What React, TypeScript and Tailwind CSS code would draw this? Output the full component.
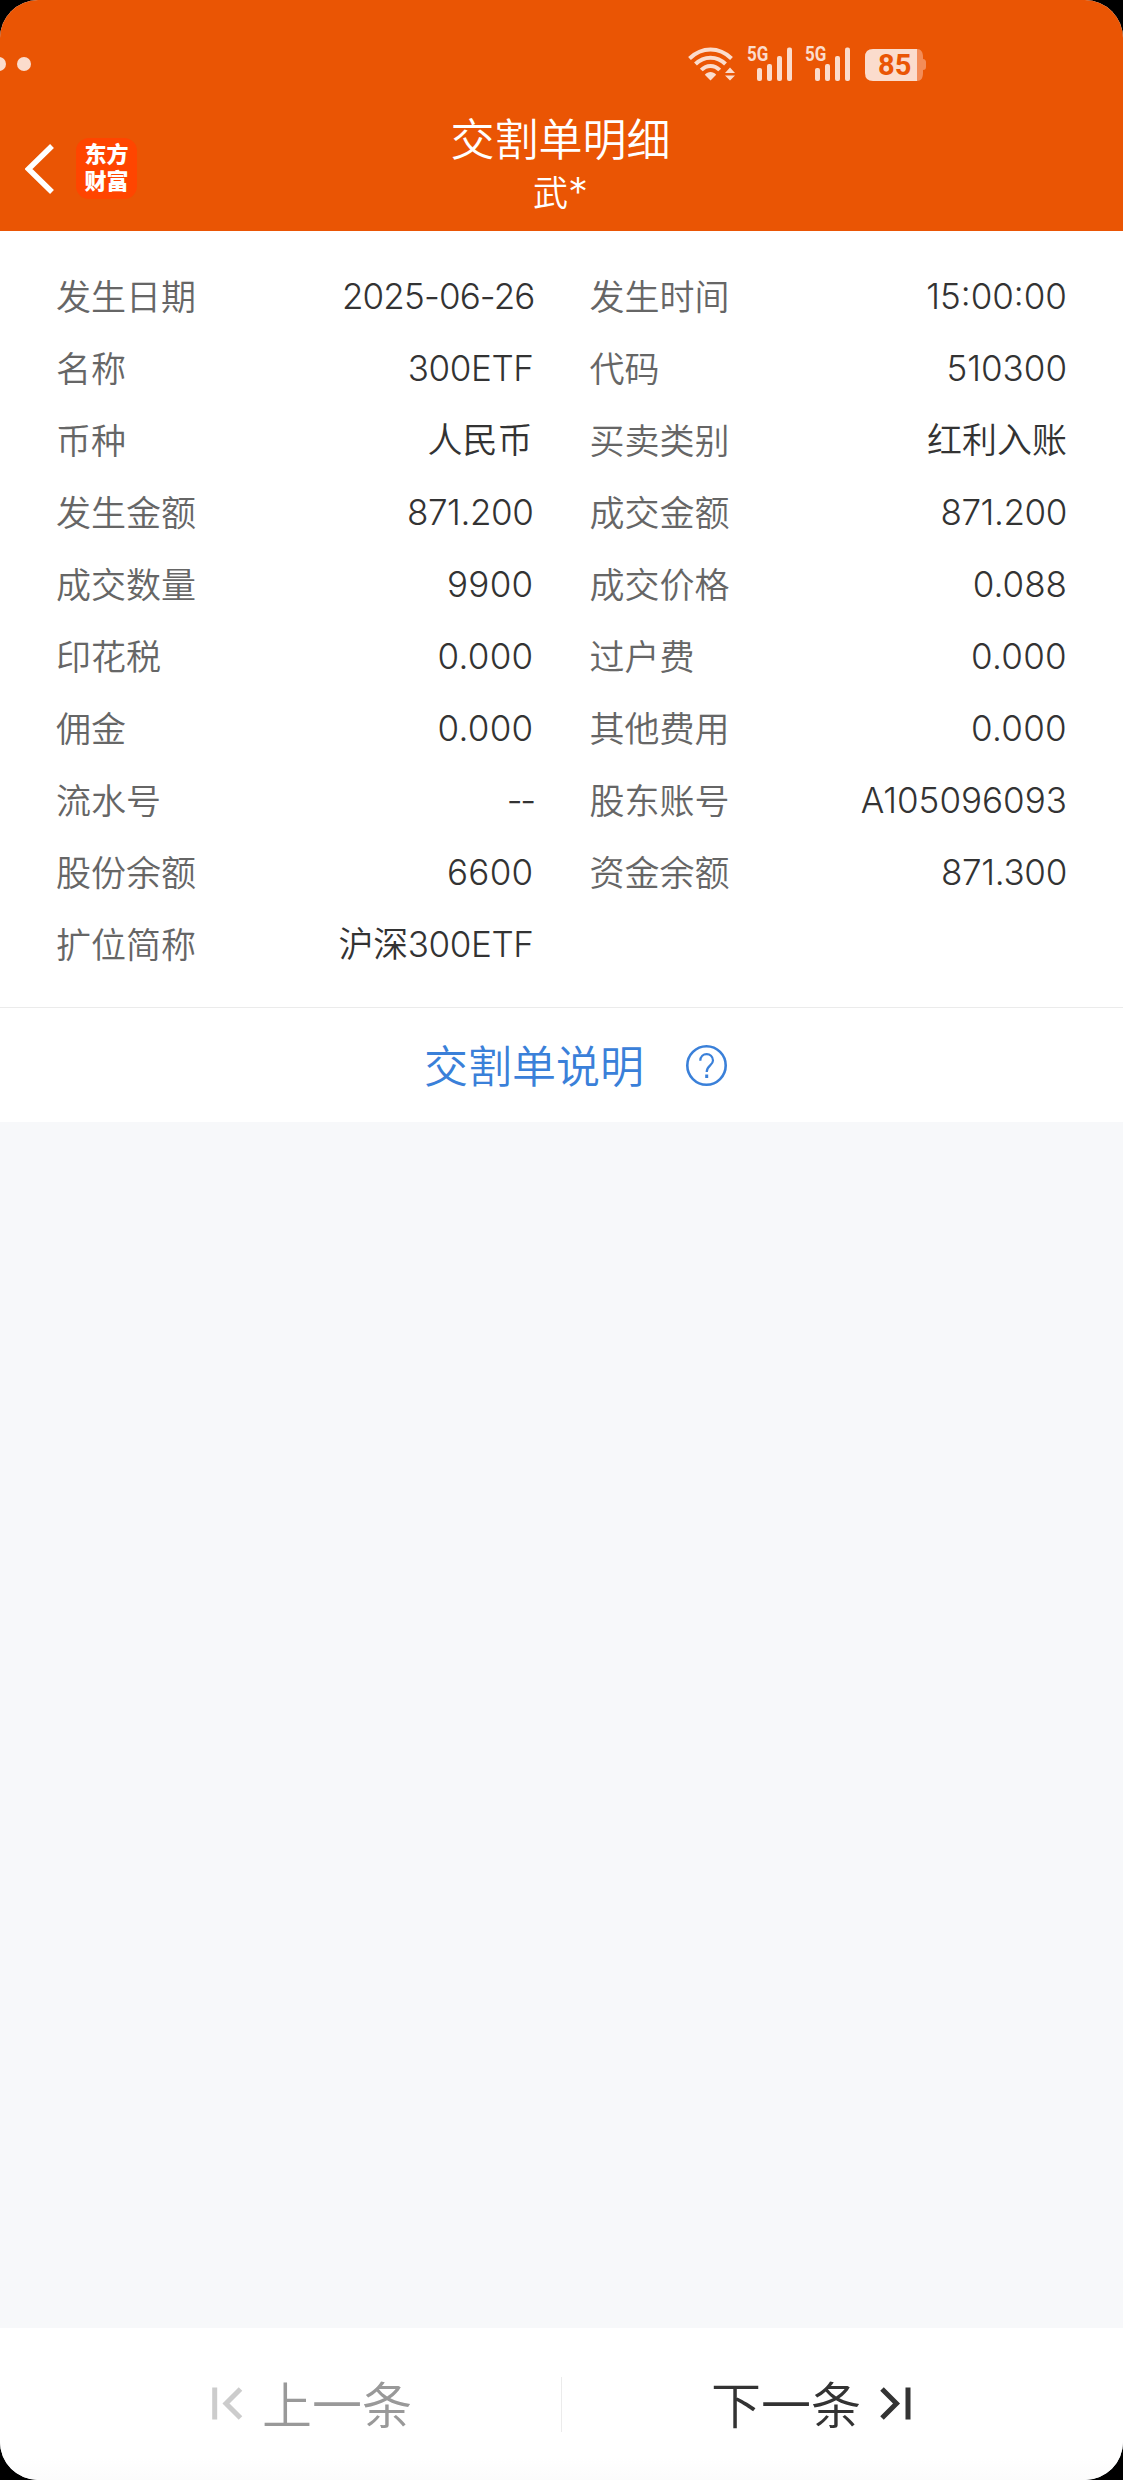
import React from 'react';
import clsx from 'clsx';

type Field = {
    label: string;
    value: string;
    tracking?: string;
};

const fields: Field[] = [
    { label: '发生日期', value: '2025-06-26', tracking: 'tracking-[-0.85px] -mr-px' },
    { label: '发生时间', value: '15:00:00' },
    { label: '名称', value: '300ETF', tracking: 'tracking-[-0.4px]' },
    { label: '代码', value: '510300' },
    { label: '币种', value: '人民币', tracking: 'mr-px' },
    { label: '买卖类别', value: '红利入账' },
    { label: '发生金额', value: '871.200', tracking: 'tracking-[-0.4px]' },
    { label: '成交金额', value: '871.200', tracking: 'tracking-[-0.4px]' },
    { label: '成交数量', value: '9900', tracking: 'tracking-[0.3px]' },
    { label: '成交价格', value: '0.088' },
    { label: '印花税', value: '0.000', tracking: 'tracking-[0.3px]' },
    { label: '过户费', value: '0.000', tracking: 'tracking-[0.3px]' },
    { label: '佣金', value: '0.000', tracking: 'tracking-[0.3px]' },
    { label: '其他费用', value: '0.000', tracking: 'tracking-[0.3px]' },
    { label: '流水号', value: '--', tracking: 'tracking-[-2.5px]' },
    { label: '股东账号', value: 'A105096093' },
    { label: '股份余额', value: '6600', tracking: 'tracking-[0.3px]' },
    { label: '资金余额', value: '871.300', tracking: 'tracking-[-0.3px]' },
    { label: '扩位简称', value: '沪深300ETF', tracking: 'tracking-[-0.4px]' },
];

const WifiIcon = () => (
    <svg width="48" height="36" viewBox="0 0 48 36" fill="none" stroke="#fbdccd" strokeWidth="4">
        <path d="M1.5 12.5C14 0.5 31 0.5 43.5 12.5" />
        <path d="M7.5 18C16 9.5 29 9.5 37.5 18" />
        <path d="M13.3 24C18.5 18.5 26.5 18.5 31.7 24" />
        <path d="M22.5 34.5L16.8 28.8C20 25.2 25 25.2 28.2 28.8Z" fill="#fbdccd" stroke="none" />
        <path d="M42 21.5L47 27H37ZM42 34.5L37 29.5H47Z" fill="#fbdccd" stroke="none" />
    </svg>
);

const Signal = () => (
    <div className="relative h-[36px] w-[46px]">
        <span className="absolute -left-px top-0 origin-left scale-x-[0.85] font-[Roboto] text-[20px] font-bold leading-[17px] text-[#fbdccd]">
            5G
        </span>
        <svg className="absolute left-0 top-0" width="46" height="36" viewBox="0 0 46 36" fill="#fbdccd">
            <rect x="9" y="22" width="5" height="13" rx="2" />
            <rect x="19" y="18" width="5" height="17" rx="2" />
            <rect x="29" y="10" width="5" height="25" rx="2" />
            <rect x="39" y="1.5" width="5" height="33.5" rx="2" />
        </svg>
    </div>
);

const Battery = () => (
    <div className="relative h-[32px] w-[62px]">
        <svg className="absolute left-0 top-0" width="62" height="32" viewBox="0 0 62 32">
            <path d="M52 0C56 0 58 3 58 8V10C60 10 61 11.5 61 13V18C61 20 60 21 58 21V24C58 29 56 32 52 32Z" fill="#f38c58" />
            <path d="M8 0H52V32H8Q0 32 0 24V8Q0 0 8 0Z" fill="#fbdccd" />
        </svg>
        <span className="absolute left-[13px] top-0 font-[Roboto] text-[29px] font-bold leading-[32px] text-[#ea5504]">
            85
        </span>
    </div>
);

export default function App() {
    return (
        <div className="h-[2480px] w-[1123px] bg-black">
            <div className="flex h-full flex-col overflow-hidden rounded-[38px] bg-[#f7f8fa] font-['Inter','Noto_Sans_CJK_SC',sans-serif] font-[350] text-[#333]">
                <header className="h-[231px] bg-[#ea5504]">
                    <div className="flex h-[104px] items-start pt-[46px]">
                        <div className="-ml-2 mt-[11px] flex w-[696px] gap-[11px]">
                            <span className="size-[14px] rounded-full bg-[#fbdccd]" />
                            <span className="size-[14px] rounded-full bg-[#fbdccd]" />
                        </div>
                        <WifiIcon />
                        <div className="ml-[12px] flex gap-[12px]">
                            <Signal />
                            <Signal />
                        </div>
                        <div className="ml-[13px] mt-[2.5px]">
                            <Battery />
                        </div>
                    </div>
                    <div className="grid grid-cols-[1fr_auto_1fr]">
                        <div className="flex items-start gap-[22px] pl-[25px] pt-[34px]">
                            <svg className="mt-[6px]" width="29" height="50" viewBox="0 0 29 50" fill="none" stroke="#fff" strokeWidth="5.5">
                                <path d="M27 2L3.5 25L27 48" />
                            </svg>
                            <div className="flex size-[61px] flex-col items-center justify-center rounded-[13px] bg-[#ff4500] pb-[2px] text-[22px] font-black leading-[27px] text-white">
                                <span>东方</span>
                                <span>财富</span>
                            </div>
                        </div>
                        <div className="flex flex-col items-center pr-[2px] text-white">
                            <h1 className="mt-[6px] text-[44px] leading-[60px]">交割单明细</h1>
                            <p className="text-[35px] leading-[46px]">
                                武<span className="text-[40px] leading-none">*</span>
                            </p>
                        </div>
                    </div>
                </header>

                <section className="grid h-[777px] grid-cols-2 content-start border-b border-[#ebebeb] bg-white pt-[29px]">
                    {fields.map((field, i) => (
                        <div
                            key={field.label}
                            className={clsx(
                                'flex h-[72px] items-center justify-between text-[35px] leading-[50px]',
                                i % 2 === 0 ? 'pl-[56px] pr-[28px]' : 'pl-[28px] pr-[56px]'
                            )}
                        >
                            <span className="pt-px text-[#666]">{field.label}</span>
                            <span className={field.tracking}>{field.value}</span>
                        </div>
                    ))}
                </section>

                <div className="flex h-[114px] items-center bg-white pl-[424px] text-[#3a80d9]">
                    <span className="pt-[4px] text-[44px] leading-[60px]">交割单说明</span>
                    <svg className="ml-[41px]" width="43" height="43" viewBox="0 0 43 43" fill="none" stroke="currentColor">
                        <circle cx="21.5" cy="21.5" r="19.2" strokeWidth="2.6" />
                        <path d="M15.3 16.8C15.3 8 28 8 28 16.5C28 21.5 21.7 21.5 21.7 28" strokeWidth="2.2" />
                        <path d="M21.7 30.5V34" strokeWidth="3" />
                    </svg>
                </div>

                <footer className="mt-auto flex h-[152px] items-center bg-linear-to-b from-white from-85% to-[#fbfbfb] text-[50px]">
                    <button className="flex h-full w-[561px] items-center pl-[212px] text-[#999]">
                        <svg className="mb-[2px]" width="31" height="33" viewBox="0 0 31 33" fill="none" stroke="#ccc" strokeWidth="5">
                            <path d="M2.7 0.5V32.5M28.5 2L14 16.5L28.5 31" />
                        </svg>
                        <span className="ml-[19px] pt-[4px]">上一条</span>
                    </button>
                    <span className="h-[55px] w-px bg-[#ebebeb]" />
                    <button className="flex h-full w-[561px] items-center pl-[149px]">
                        <span className="pt-[4px]">下一条</span>
                        <svg className="mb-[2px] ml-[19px]" width="31" height="33" viewBox="0 0 31 33" fill="none" stroke="#333" strokeWidth="5">
                            <path d="M28 0.5V32.5M2 2L16.5 16.5L2 31" />
                        </svg>
                    </button>
                </footer>
            </div>
        </div>
    );
}
